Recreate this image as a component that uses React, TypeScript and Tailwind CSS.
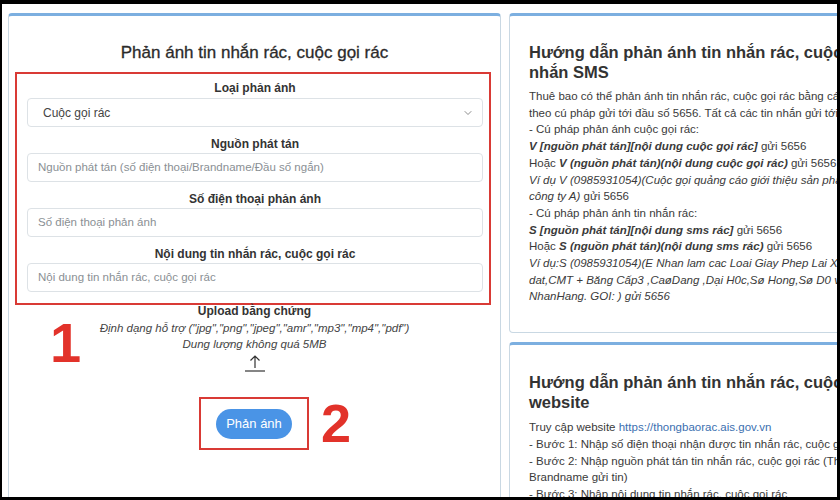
import React from 'react';
import { ChevronDown } from 'lucide-react';

const fields = [
  { label: 'Nguồn phát tán', placeholder: 'Nguồn phát tán (số điện thoại/Brandname/Đầu số ngắn)' },
  { label: 'Số điện thoại phản ánh', placeholder: 'Số điện thoại phản ánh' },
  { label: 'Nội dung tin nhắn rác, cuộc gọi rác', placeholder: 'Nội dung tin nhắn rác, cuộc gọi rác' },
];

const Card: React.FC<{ className?: string; children: React.ReactNode }> = ({ className = '', children }) => (
  <div
    className={`rounded-[4px] border border-[#c9d8e3] border-t-[3px] border-t-[#7cafe0] bg-white ${className}`}
  >
    {children}
  </div>
);

export default function App() {
  return (
    <div className="w-[840px] h-[500px] bg-black pt-[4px] pl-[2px] pr-[3px] pb-[3px] font-['Liberation_Sans',Arial,sans-serif] text-[#333]">
      <div className="h-full bg-white overflow-hidden flex gap-[8px] pl-[6px] pt-[9px]">
        {/* Form card */}
        <Card className="relative w-[493px] h-[520px] shrink-0">
          <h1 className="pt-[27px] text-center text-[17px] leading-[20px] font-medium text-[#2b2b2b] [-webkit-text-stroke:0.3px_#2b2b2b]">
            Phản ánh tin nhắn rác, cuộc gọi rác
          </h1>

          <div className="mt-[9px] ml-[6px] w-[476px] border-2 border-[#d93a35] pl-[10px] pr-[6px] pt-[6px] pb-[11px]">
            <div className="text-center text-[12px] leading-[16px] font-bold">Loại phản ánh</div>
            <div className="mt-[2px] h-[29px] flex items-center justify-between rounded-[4px] border border-[#dde2e6] pl-[15px] pr-[8px] text-[12px] text-[#444]">
              <span>Cuộc gọi rác</span>
              <ChevronDown size={12} strokeWidth={1.5} className="text-[#666]" />
            </div>
            {fields.map((f) => (
              <div key={f.label} className="mt-[9px]">
                <div className="text-center text-[12px] leading-[16px] font-bold">{f.label}</div>
                <div className="mt-[1px] h-[29px] flex items-center rounded-[4px] border border-[#dde2e6] px-[10px] text-[11.5px] text-[#8a8f94]">
                  {f.placeholder}
                </div>
              </div>
            ))}
          </div>

          <div className="-mt-[1px] text-center">
            <div className="text-[12px] leading-[14px] font-bold">Upload bằng chứng</div>
            <div className="mt-[2px] text-[11.5px] leading-[16px] italic text-[#444]">
              Định dạng hỗ trợ ("jpg","png","jpeg","amr","mp3","mp4","pdf")
            </div>
            <div className="text-[11.5px] leading-[16px] italic text-[#444]">Dung lượng không quá 5MB</div>
            <div className="mt-[2px] flex justify-center">
              <svg width="22" height="18" viewBox="0 0 22 18" fill="none" stroke="#333" strokeWidth="1.2">
                <path d="M11 14V2M6.5 6.5L11 2l4.5 4.5" />
                <path d="M1 17h20" />
              </svg>
            </div>
          </div>

          <div className="mt-[25px] flex justify-center">
            <div className="ml-[-1px] border-2 border-[#d93a35] px-[15px] pt-[10px] pb-[9px]">
              <button className="h-[30px] w-[76px] rounded-full bg-[#4a94e6] text-[13px] text-white">
                Phản ánh
              </button>
            </div>
          </div>

          {/* annotation numbers */}
          <div className="absolute left-[41px] top-[297px] text-[56px] leading-[60px] font-bold text-[#e2322a]">1</div>
          <div className="absolute left-[312px] top-[377px] text-[54px] leading-[60px] font-bold text-[#e2322a]">2</div>
        </Card>

        {/* Guide column */}
        <div className="w-[420px] shrink-0 flex flex-col gap-[9px]">
          <Card className="pl-[19px] pt-[26px] pb-[27px] whitespace-nowrap">
            <h2 className="text-[16.5px] leading-[20px] font-bold text-[#333]">
              Hướng dẫn phản ánh tin nhắn rác, cuộc gọi rác qua tin
              <br />
              nhắn SMS
            </h2>
            <div className="mt-[6px] text-[11.5px] leading-[16.7px] text-[#3a3a3a]">
              <div>Thuê bao có thể phản ánh tin nhắn rác, cuộc gọi rác bằng cách nhắn tin</div>
              <div>theo cú pháp gửi tới đầu số 5656. Tất cả các tin nhắn gửi tới 5656 đều miễn phí.</div>
              <div>- Cú pháp phản ánh cuộc gọi rác:</div>
              <div>
                <b><i>V [nguồn phát tán][nội dung cuộc gọi rác]</i></b> gửi 5656
              </div>
              <div>
                Hoặc <b><i>V (nguồn phát tán)(nội dung cuộc gọi rác)</i></b> gửi 5656
              </div>
              <div className="italic">Ví dụ V (0985931054)(Cuộc gọi quảng cáo giới thiệu sản phẩm của</div>
              <div>
                <i>công ty A)</i> gửi 5656
              </div>
              <div>- Cú pháp phản ánh tin nhắn rác:</div>
              <div>
                <b><i>S [nguồn phát tán][nội dung sms rác]</i></b> gửi 5656
              </div>
              <div>
                Hoặc <b><i>S (nguồn phát tán)(nội dung sms rác)</i></b> gửi 5656
              </div>
              <div className="italic">Ví dụ:S (0985931054)(E Nhan lam cac Loai Giay Phep Lai Xe, Bang</div>
              <div className="italic">dat,CMT + Băng Cấp3 ,CaøDang ,Dại H0c,Sø Hong,Sø D0 vay</div>
              <div className="italic">NhanHang. GOI: ) gửi 5656</div>
            </div>
          </Card>

          <Card className="h-[200px] pl-[19px] pt-[27px] whitespace-nowrap">
            <h2 className="text-[16.5px] leading-[20px] font-bold text-[#333]">
              Hướng dẫn phản ánh tin nhắn rác, cuộc gọi rác qua
              <br />
              website
            </h2>
            <div className="mt-[7px] text-[11.5px] leading-[16.7px] text-[#3a3a3a]">
              <div>
                Truy cập website <span className="text-[#3b6fb0]">https://thongbaorac.ais.gov.vn</span>
              </div>
              <div>- Bước 1: Nhập số điện thoại nhận được tin nhắn rác, cuộc gọi rác</div>
              <div>- Bước 2: Nhập nguồn phát tán tin nhắn rác, cuộc gọi rác (Thuê bao/</div>
              <div>Brandname gửi tin)</div>
              <div>- Bước 3: Nhập nội dung tin nhắn rác, cuộc gọi rác</div>
            </div>
          </Card>
        </div>
      </div>
    </div>
  );
}
